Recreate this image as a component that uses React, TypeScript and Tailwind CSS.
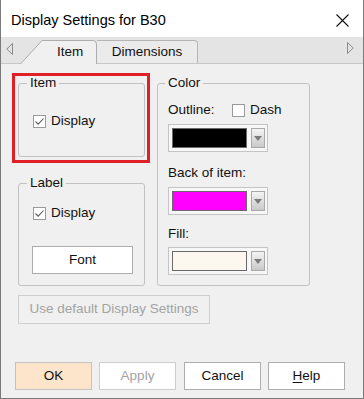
import React from "react";

const font = { fontFamily: '"Liberation Sans", Arial, sans-serif' };

function Check({ checked }: { checked?: boolean }) {
  return (
    <span className="flex h-[13px] w-[13px] shrink-0 items-center justify-center border border-[#9a9a9a] bg-white">
      {checked && (
        <svg width="11" height="11" viewBox="0 0 11 11">
          <path d="M1.5 5.5 L4.2 8.2 L9.5 2.5" fill="none" stroke="#5a5a5a" strokeWidth="1.1" />
        </svg>
      )}
    </span>
  );
}

function Combo({ color }: { color: string }) {
  return (
    <div className="flex h-[28px] w-[100px] items-center border border-[#c4c4c4] bg-[#f7f7f7] pl-[3px]">
      <div className="h-[20px] w-[75px] border border-[#6a6a6a]" style={{ background: color }} />
      <div className="ml-[4px] flex h-[20px] w-[14px] items-center justify-center border border-[#a9a9a9] bg-gradient-to-b from-[#f4f4f4] to-[#c9c9c9]">
        <svg width="8" height="5" viewBox="0 0 8 5">
          <path d="M0 0 L8 0 L4 5 Z" fill="#7a7a7a" />
        </svg>
      </div>
    </div>
  );
}

function Btn({ children, className }: { children: React.ReactNode; className?: string }) {
  return (
    <div className={"flex h-[28px] w-[77px] items-center justify-center border text-[13.5px] " + (className ?? "")}>
      {children}
    </div>
  );
}

export default function App() {
  return (
    <div
      className="flex h-[399px] w-[364px] flex-col border-x border-b border-[#7a7a7a] bg-[#f0f0f0] text-[#111]"
      style={font}
    >
      {/* Title bar */}
      <div className="flex h-[37px] items-center justify-between bg-white pl-[10px] pr-[14px] pt-[4px]">
        <span className="text-[14.5px] text-black">Display Settings for B30</span>
        <svg width="13" height="13" viewBox="0 0 13 13">
          <path d="M0.5 0.5 L12.5 12.5 M12.5 0.5 L0.5 12.5" stroke="#111" strokeWidth="1.1" />
        </svg>
      </div>

      {/* Tab strip */}
      <div className="flex h-[27px] items-end border-b border-[#c8c8c8] bg-[#e4e4e4]">
        <div className="mb-[4px] ml-[5px] w-[14px] self-center pt-[2px]">
          <svg width="7" height="12" viewBox="0 0 7 12">
            <path d="M6.5 0.5 L0.8 6 L6.5 11.5 Z" fill="none" stroke="#8a8a8a" strokeWidth="1" />
          </svg>
        </div>
        <div className="relative -mb-px h-[24px] w-[77px]">
          <svg className="absolute inset-0" width="77" height="24" viewBox="0 0 77 24">
            <path d="M0.5 24 L22 0.5 L73 0.5 Q76.5 0.5 76.5 4 L76.5 24" fill="#f0f0f0" stroke="#adadad" strokeWidth="1" />
          </svg>
          <span className="relative flex h-full items-center pl-[37px] pt-[1px] text-[13.5px]">Item</span>
        </div>
        <div className="flex h-[23px] w-[101px] items-center justify-center rounded-tr-[4px] border-r border-t border-[#b5b5b5] bg-[#ebebeb] pt-[1px] text-[13.5px]">
          Dimensions
        </div>
        <div className="flex-1" />
        <div className="mb-[6px] mr-[9px] self-center pt-[2px]">
          <svg width="7" height="12" viewBox="0 0 7 12">
            <path d="M0.5 0.5 L6.2 6 L0.5 11.5 Z" fill="none" stroke="#8a8a8a" strokeWidth="1" />
          </svg>
        </div>
      </div>

      {/* Content */}
      <div className="flex flex-1 flex-col pl-[11px] pt-[9px]">
        <div className="flex">
          {/* Left column */}
          <div className="flex w-[138px] flex-col">
            <div className="h-[90px] w-[138px] border-[3px] border-[#e01f27] pl-[3px]">
              <fieldset className="h-[81px] w-[127px] rounded-[3px] border border-[#c2c2c2] px-0">
                <legend className="ml-[8px] px-[3px] text-[13.5px] leading-[14px]">Item</legend>
                <div className="mt-[24px] flex h-[14px] items-center pl-[14px]">
                  <Check checked />
                  <span className="ml-[5px] text-[13.5px]">Display</span>
                </div>
              </fieldset>
            </div>
            <fieldset className="ml-[6px] mt-[13px] h-[110px] w-[127px] rounded-[3px] border border-[#c2c2c2] px-0">
              <legend className="ml-[8px] px-[3px] text-[13.5px] leading-[14px]">Label</legend>
              <div className="mt-[16px] flex h-[14px] items-center pl-[14px]">
                <Check checked />
                <span className="ml-[5px] text-[13.5px]">Display</span>
              </div>
              <div className="ml-[13px] mt-[26px] flex h-[28px] w-[101px] items-center justify-center border border-[#adadad] bg-white text-[13.5px]">
                Font
              </div>
            </fieldset>
          </div>

          {/* Right column */}
          <fieldset className="ml-[7px] mt-[3px] h-[210px] w-[153px] rounded-[3px] border border-[#c2c2c2] px-0">
            <legend className="ml-[7px] px-[3px] text-[13.5px] leading-[14px]">Color</legend>
            <div className="pl-[10px]">
              <div className="mt-[13px] flex h-[14px] items-center">
                <span className="w-[64px] text-[13.5px]">Outline:</span>
                <Check />
                <span className="ml-[5px] text-[13.5px]">Dash</span>
              </div>
              <div className="mt-[7px]">
                <Combo color="#000000" />
              </div>
              <div className="mt-[14px] h-[14px] text-[13.5px] leading-[14px]">Back of item:</div>
              <div className="mt-[7px]">
                <Combo color="#ff00ff" />
              </div>
              <div className="mt-[12px] h-[14px] text-[13.5px] leading-[14px]">Fill:</div>
              <div className="mt-[6px]">
                <Combo color="#fdf8ef" />
              </div>
            </div>
          </fieldset>
        </div>

        <div className="ml-[6px] mt-[9px] flex h-[29px] w-[192px] items-center justify-center border border-[#cfcfcf] bg-[#f0f0f0] text-[13.5px] text-[#a3a3a3]">
          Use default Display Settings
        </div>

        <div className="ml-[3px] mt-[38px] flex gap-[7px]">
          <Btn className="border-[#c3c3c3] bg-[#fde5cc]">OK</Btn>
          <Btn className="border-[#cdcdcd] bg-white text-[#a3a3a3]">Apply</Btn>
          <Btn className="ml-[1px] border-[#adadad] bg-white">Cancel</Btn>
          <Btn className="border-[#adadad] bg-white">
            <span>
              <span className="underline underline-offset-2">H</span>elp
            </span>
          </Btn>
        </div>
      </div>
    </div>
  );
}
